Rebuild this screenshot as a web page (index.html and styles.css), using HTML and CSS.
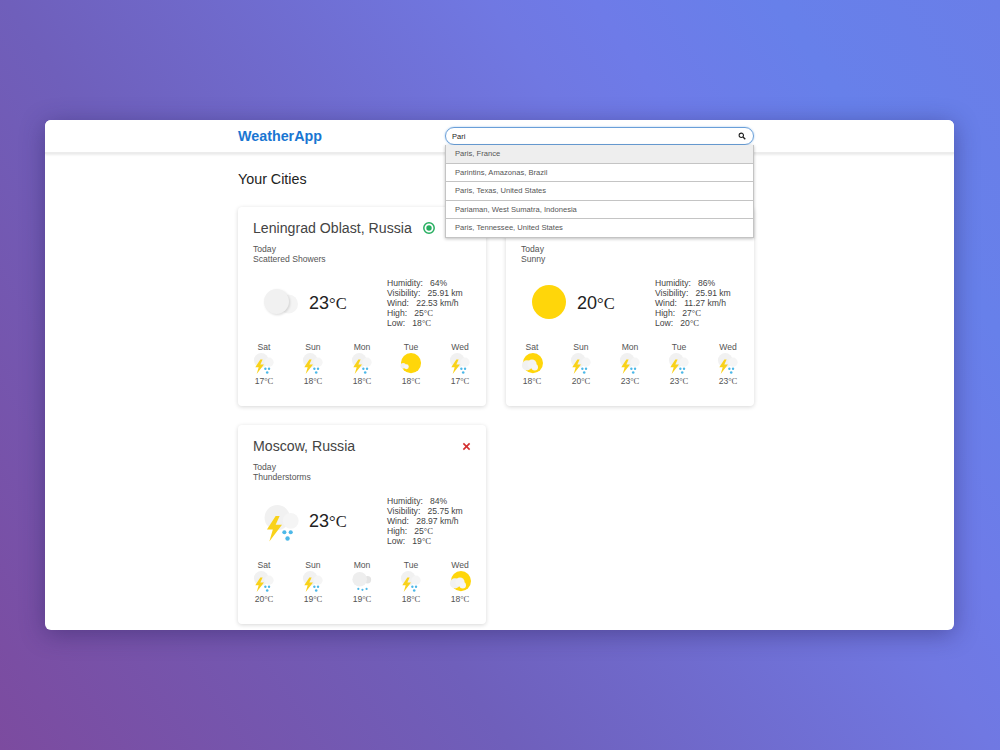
FILE: index.html
```html
<!DOCTYPE html>
<html lang="en">
<head>
<meta charset="utf-8">
<title>WeatherApp</title>
<link rel="stylesheet" href="styles.css">
</head>
<body>
<svg class="defs" width="0" height="0" aria-hidden="true">
  <symbol id="i-storm" viewBox="0 0 24 24">
    <circle cx="9" cy="8" r="8" fill="#f1f1f1"/>
    <circle cx="17.5" cy="10" r="5" fill="#f5f5f5"/>
    <path d="M8 7 2.5 15.5h3.7L4 23l8-10.5H8L10.5 7Z" fill="#f9d21a"/>
    <circle cx="13.5" cy="17.2" r="1.3" fill="#4cb8e8"/><circle cx="17.5" cy="17.2" r="1.3" fill="#4cb8e8"/><circle cx="15.5" cy="21.2" r="1.4" fill="#4cb8e8"/>
  </symbol>
  <symbol id="i-sun" viewBox="0 0 24 24"><circle cx="12" cy="12" r="12" fill="#ffd60a"/></symbol>
  <symbol id="i-sunny-cloud-l" viewBox="0 0 24 24">
    <circle cx="12" cy="11" r="11" fill="#ffd60a"/>
    <circle cx="3.5" cy="14" r="3" fill="#f1f1f1"/><circle cx="7" cy="15" r="2.6" fill="#f6f6f6"/>
  </symbol>
  <symbol id="i-sunny-cloud" viewBox="0 0 24 24">
    <circle cx="13" cy="11" r="11" fill="#ffd60a"/>
    <circle cx="6.5" cy="13.5" r="5.5" fill="#f1f1f1"/><circle cx="12" cy="12" r="5" fill="#f4f4f4"/><circle cx="15" cy="15.5" r="3.5" fill="#f6f6f6"/>
  </symbol>
  <symbol id="i-rain" viewBox="0 0 24 24">
    <circle cx="18" cy="9.5" r="4" fill="#e4e4e4"/>
    <circle cx="9.5" cy="9" r="8" fill="#eeeeee"/>
    <circle cx="8" cy="19.5" r="1.2" fill="#4cb8e8"/><circle cx="12.5" cy="20.5" r="1.2" fill="#4cb8e8"/><circle cx="17" cy="19.5" r="1.2" fill="#4cb8e8"/>
  </symbol>
</svg>

<main class="window">
  <header class="topbar">
    <div class="topbar-inner">
      <h1 class="brand">WeatherApp</h1>
      <div class="search">
        <div class="search-box">
          <input class="search-input" type="text" value="Pari" aria-label="Search city">
          <svg class="search-icon" viewBox="0 0 12 12"><circle cx="5" cy="5" r="3.3" fill="none" stroke="#222" stroke-width="1.7"/><path d="m7.5 7.5 3.4 3.4" stroke="#222" stroke-width="2"/></svg>
        </div>
        <ul class="suggestions">
          <li class="suggestion active">Paris, France</li>
          <li class="suggestion">Parintins, Amazonas, Brazil</li>
          <li class="suggestion">Paris, Texas, United States</li>
          <li class="suggestion">Pariaman, West Sumatra, Indonesia</li>
          <li class="suggestion">Paris, Tennessee, United States</li>
        </ul>
      </div>
    </div>
  </header>

  <section class="content">
    <h2 class="heading">Your Cities</h2>
    <div class="cards">

      <article class="card">
        <div class="card-head">
          <h3 class="city">Leningrad Oblast, Russia</h3>
          <svg class="status" viewBox="0 0 14 14"><circle cx="7" cy="7" r="5.2" fill="none" stroke="#27ae60" stroke-width="1.5"/><circle cx="7" cy="7" r="2.7" fill="#27ae60"/></svg>
        </div>
        <p class="summary">Today<br>Scattered Showers</p>
        <div class="now">
          <svg class="now-icon" viewBox="0 0 40 40"><circle cx="29.5" cy="22" r="9.5" fill="#f4f4f4"/><circle cx="17.5" cy="19.5" r="12.5" fill="#f1f1f1" class="lift"/></svg>
          <div class="temp">23<span class="unit">°C</span></div>
          <div class="stats">Humidity:&nbsp;&nbsp; 64%<br>Visibility:&nbsp;&nbsp; 25.91 km<br>Wind:&nbsp;&nbsp; 22.53 km/h<br>High:&nbsp;&nbsp; 25<span class="unit">°C</span><br>Low:&nbsp;&nbsp; 18<span class="unit">°C</span></div>
        </div>
        <div class="forecast">
          <div class="day">Sat<svg class="day-icon"><use href="#i-storm"/></svg><span>17<span class="unit">°C</span></span></div>
          <div class="day">Sun<svg class="day-icon"><use href="#i-storm"/></svg><span>18<span class="unit">°C</span></span></div>
          <div class="day">Mon<svg class="day-icon"><use href="#i-storm"/></svg><span>18<span class="unit">°C</span></span></div>
          <div class="day">Tue<svg class="day-icon"><use href="#i-sunny-cloud-l"/></svg><span>18<span class="unit">°C</span></span></div>
          <div class="day">Wed<svg class="day-icon"><use href="#i-storm"/></svg><span>17<span class="unit">°C</span></span></div>
        </div>
      </article>

      <article class="card">
        <div class="card-head"><h3 class="city">&nbsp;</h3></div>
        <p class="summary">Today<br>Sunny</p>
        <div class="now">
          <svg class="now-icon"><use href="#i-sun" x="5" y="3" width="34" height="34"/></svg>
          <div class="temp">20<span class="unit">°C</span></div>
          <div class="stats">Humidity:&nbsp;&nbsp; 86%<br>Visibility:&nbsp;&nbsp; 25.91 km<br>Wind:&nbsp;&nbsp; 11.27 km/h<br>High:&nbsp;&nbsp; 27<span class="unit">°C</span><br>Low:&nbsp;&nbsp; 20<span class="unit">°C</span></div>
        </div>
        <div class="forecast">
          <div class="day">Sat<svg class="day-icon"><use href="#i-sunny-cloud"/></svg><span>18<span class="unit">°C</span></span></div>
          <div class="day">Sun<svg class="day-icon"><use href="#i-storm"/></svg><span>20<span class="unit">°C</span></span></div>
          <div class="day">Mon<svg class="day-icon"><use href="#i-storm"/></svg><span>23<span class="unit">°C</span></span></div>
          <div class="day">Tue<svg class="day-icon"><use href="#i-storm"/></svg><span>23<span class="unit">°C</span></span></div>
          <div class="day">Wed<svg class="day-icon"><use href="#i-storm"/></svg><span>23<span class="unit">°C</span></span></div>
        </div>
      </article>

      <article class="card">
        <div class="card-head">
          <h3 class="city">Moscow, Russia</h3>
          <svg class="remove" viewBox="0 0 14 14"><path d="m3 3 8 8M11 3l-8 8" stroke="#d32f2f" stroke-width="2"/></svg>
        </div>
        <p class="summary">Today<br>Thunderstorms</p>
        <div class="now">
          <svg class="now-icon"><use href="#i-storm" x="4" y="5" width="38" height="38"/></svg>
          <div class="temp">23<span class="unit">°C</span></div>
          <div class="stats">Humidity:&nbsp;&nbsp; 84%<br>Visibility:&nbsp;&nbsp; 25.75 km<br>Wind:&nbsp;&nbsp; 28.97 km/h<br>High:&nbsp;&nbsp; 25<span class="unit">°C</span><br>Low:&nbsp;&nbsp; 19<span class="unit">°C</span></div>
        </div>
        <div class="forecast">
          <div class="day">Sat<svg class="day-icon"><use href="#i-storm"/></svg><span>20<span class="unit">°C</span></span></div>
          <div class="day">Sun<svg class="day-icon"><use href="#i-storm"/></svg><span>19<span class="unit">°C</span></span></div>
          <div class="day">Mon<svg class="day-icon"><use href="#i-rain"/></svg><span>19<span class="unit">°C</span></span></div>
          <div class="day">Tue<svg class="day-icon"><use href="#i-storm"/></svg><span>18<span class="unit">°C</span></span></div>
          <div class="day">Wed<svg class="day-icon"><use href="#i-sunny-cloud"/></svg><span>18<span class="unit">°C</span></span></div>
        </div>
      </article>

    </div>
  </section>
</main>
</body>
</html>
```
FILE: styles.css
```css
* { box-sizing: border-box; }
html, body { margin: 0; height: 100%; }
body {
  height: 750px;
  overflow: hidden;
  display: flex;
  align-items: center;
  justify-content: center;
  padding-right: 1px;
  background: linear-gradient(56deg, #7c4b9f 0%, #6f5fbb 34%, #7078e2 66%, #6e7be8 73%, #6780ea 85%, #6a7ee8 100%);
  font-family: "Liberation Sans", Arial, sans-serif;
  color: #444;
}
.defs { position: absolute; }
.window {
  width: 909px;
  height: 510px;
  background: #fff;
  border-radius: 6px;
  box-shadow: 0 4px 24px rgba(40, 30, 90, .45);
  overflow: hidden;
}
.topbar {
  height: 34px;
  border-bottom: 2px solid #ececec;
  box-shadow: 0 1px 2px rgba(0, 0, 0, .08);
  background: #fff;
}
.topbar-inner {
  width: 516px;
  height: 32px;
  margin-left: 193px;
  display: flex;
  align-items: center;
  justify-content: space-between;
}
.brand { margin: 0; font-size: 14.3px; font-weight: 700; color: #1976d2; }
.search { position: relative; width: 309px; z-index: 5; }
.search-box {
  height: 18px;
  border: 1px solid #6a9fd8;
  border-radius: 9px;
  box-shadow: 0 0 2px rgba(80, 150, 220, .6);
  display: flex;
  align-items: center;
  padding: 0 7px 0 6px;
}
.search-input {
  flex: 1;
  min-width: 0;
  border: 0;
  padding: 0;
  outline: 0;
  background: transparent;
  font: 7.5px "Liberation Sans", Arial, sans-serif;
  color: #222;
}
.search-icon { width: 8px; height: 8px; }
.suggestions {
  position: absolute;
  top: 18px;
  left: 0;
  right: 0;
  margin: 0;
  padding: 0;
  list-style: none;
  background: #fff;
  box-shadow: 0 1px 3px rgba(0, 0, 0, .25);
}
.suggestion {
  height: 18.5px;
  border: 1px solid #c4c4c4;
  border-top-width: 0;
  padding-left: 9px;
  font-size: 7.6px;
  line-height: 18px;
  color: #555;
}
.suggestion.active { background: #eeeeee; }
.content { width: 516px; margin-left: 193px; }
.heading { margin: 0; padding-top: 17px; font-size: 14.3px; line-height: 17px; font-weight: 400; color: #222; }
.cards {
  display: grid;
  grid-template-columns: 248px 248px;
  gap: 19px 20px;
  margin-top: 19px;
}
.card {
  height: 199px;
  padding: 12px 15px;
  border-radius: 4px;
  background: #fff;
  box-shadow: 0 1px 4px rgba(0, 0, 0, .16);
}
.card-head { display: flex; align-items: center; justify-content: space-between; height: 18px; }
.city { margin: 0; font-size: 14.15px; line-height: 18px; font-weight: 400; color: #444; }
.status { width: 14px; height: 14px; margin: 0 auto 0 10px; }
.remove { width: 11px; height: 11px; margin-right: -1px; }
.summary { margin: 7px 0 0; font-size: 8.6px; line-height: 10px; color: #555; }
.now { display: flex; align-items: center; height: 50px; margin-top: 13px; }
.now-icon { width: 40px; height: 40px; flex: none; margin-left: 6px; overflow: visible; }
.lift { filter: drop-shadow(1px 1px 1px rgba(0,0,0,.14)); }
.temp { margin: 2px 0 0 10px; font-size: 18px; color: #222; width: 78px; flex: none; }
.unit { font-family: "Liberation Serif", "Times New Roman", serif; }
.temp .unit { font-size: 16.5px; }
.stats { margin-top: 2px; font-size: 8.6px; line-height: 10px; color: #444; white-space: nowrap; }
.forecast { display: flex; justify-content: space-between; margin-top: 15px; }
.day {
  width: 22px;
  display: flex;
  flex-direction: column;
  align-items: center;
  font-size: 8.6px;
  line-height: 10px;
  color: #555;
  white-space: nowrap;
}
.day-icon { width: 22px; height: 22px; margin: 1px 0; }
```
